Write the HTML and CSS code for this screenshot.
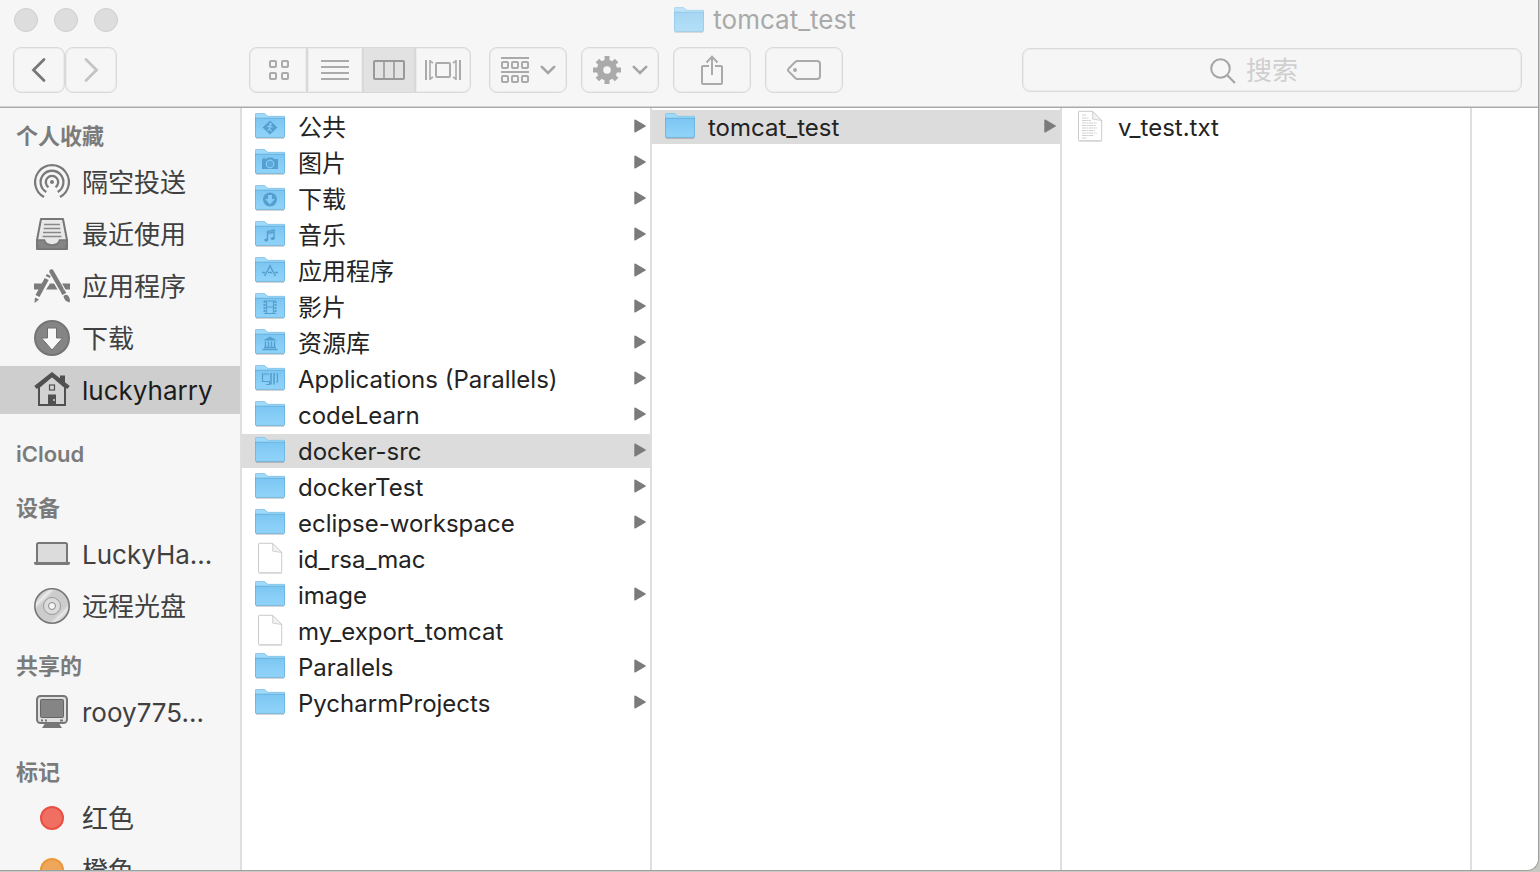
FILE: index.html
```
<!DOCTYPE html>
<html lang="zh-CN">
<head>
    <meta charset="UTF-8">
    <title>tomcat_test</title>
    <link rel="stylesheet" href="styles.css">
</head>
<body>
<svg class="defs" width="0" height="0" aria-hidden="true">
    <defs>
        <linearGradient id="blue" x1="0" y1="0" x2="0" y2="1">
            <stop offset="0" stop-color="#7cc6f2"/>
            <stop offset="1" stop-color="#91d4fa"/>
        </linearGradient>
        <linearGradient id="disc" x1="0" y1="0" x2="1" y2="1">
            <stop offset="0" stop-color="#cacaca"/>
            <stop offset="0.18" stop-color="#cacaca"/>
            <stop offset="0.25" stop-color="#ececec"/>
            <stop offset="0.32" stop-color="#cccccc"/>
            <stop offset="0.7" stop-color="#cccccc"/>
            <stop offset="0.77" stop-color="#e8e8e8"/>
            <stop offset="0.84" stop-color="#cacaca"/>
        </linearGradient>
    </defs>
    <symbol id="folder" viewBox="0 0 30 26">
        <path d="M1 25.2H29" stroke="#000" stroke-opacity=".22" stroke-width="1.2"/>
        <path d="M0 23V1.5Q0 .3 1.2 .3H9Q10 .3 10.6 1L12 2.6Q12.5 3 13.2 3H29Q30 3 30 4V23Z" fill="#9fdafa"/>
        <path d="M.4 5V1.5Q.4 .5 1.4 .5H9Q9.8 .5 10.4 1.2L12 2.8Q12.5 3.3 13.2 3.3H29.6" fill="none" stroke="#7fbfe2" stroke-width=".7"/>
        <path d="M0 5H30V23.5Q30 24.6 29 24.6H1Q0 24.6 0 23.5Z" fill="url(#blue)"/>
        <path d="M0 5.2H30M.3 5V24M29.7 4V24M.6 24.4H29.4" stroke="#5ca9d6" stroke-width=".7"/>
    </symbol>
    <symbol id="file" viewBox="0 0 26 32">
        <path d="M2 31.2H25" stroke="#000" stroke-opacity=".15"/>
        <path d="M1.5 2Q1.5 1.3 2.3 1.3H15.5L24.7 10.5V29.8Q24.7 30.7 23.8 30.7H2.4Q1.5 30.7 1.5 29.8Z" fill="#fff" stroke="#c4c4c4" stroke-width=".9"/>
        <path d="M15.5 1.3Q16 7 15.5 9Q18 9.6 24.7 10.5Z" fill="#f2f2f2" stroke="#c8c8c8" stroke-width=".8"/>
    </symbol>
    <symbol id="arrow" viewBox="0 0 12 14">
        <path d="M1 1.2L11.2 7L1 12.8Z" fill="#7b7b7b" stroke="#7b7b7b" stroke-width="1.4" stroke-linejoin="round"/>
    </symbol>
    <symbol id="down" viewBox="0 0 16 10">
        <path d="M1.8 1.8L8 8L14.2 1.8" fill="none" stroke="#a5a5a5" stroke-width="2.6" stroke-linecap="round"/>
    </symbol>
</svg>

<div id="window">
    <header>
        <div class="titlebar">
            <div class="lights">
                <button type="button" aria-label="关闭"></button>
                <button type="button" aria-label="最小化"></button>
                <button type="button" aria-label="缩放"></button>
            </div>
            <h1><svg width="30" height="26"><use href="#folder"/></svg>tomcat_test</h1>
        </div>
        <div class="toolbar">
            <div class="nav">
                <button type="button" aria-label="后退">
                    <svg width="16" height="26" viewBox="0 0 16 26"><path d="M13 2.5L2.5 13L13 23.5" fill="none" stroke="#777" stroke-width="2.8" stroke-linecap="round"/></svg>
                </button>
                <button type="button" aria-label="前进">
                    <svg width="16" height="26" viewBox="0 0 16 26"><path d="M3 2.5L13.5 13L3 23.5" fill="none" stroke="#c4c4c4" stroke-width="2.8" stroke-linecap="round"/></svg>
                </button>
            </div>
            <div class="views">
                <button type="button" class="icons" aria-label="图标">
                    <svg width="20" height="20" viewBox="0 0 20 20" fill="none" stroke="#aaa" stroke-width="2"><rect x="1" y="1" width="6" height="6" rx="1"/><rect x="13" y="1" width="6" height="6" rx="1"/><rect x="1" y="13" width="6" height="6" rx="1"/><rect x="13" y="13" width="6" height="6" rx="1"/></svg>
                </button>
                <button type="button" class="list" aria-label="列表">
                    <svg width="28" height="20" viewBox="0 0 28 20"><path d="M0 1H28M0 7H28M0 13H28M0 19H28" stroke="#aaa" stroke-width="2"/></svg>
                </button>
                <button type="button" class="columns selected" aria-label="分栏">
                    <svg width="32" height="20" viewBox="0 0 32 20" fill="none" stroke="#999" stroke-width="2"><rect x="1" y="1" width="30" height="18" rx="1"/><path d="M11 1V19M21 1V19" stroke-width="1.6"/></svg>
                </button>
                <button type="button" class="flow" aria-label="封面流">
                    <svg width="36" height="20" viewBox="0 0 36 20" fill="none" stroke="#aaa"><path d="M1 0V20M35 0V20" stroke-width="2"/><path d="M5 0V20M31 0V20" stroke-width="1.6"/><path d="M5 1L8 3M5 19L8 17M31 1L28 3M31 19L28 17" stroke-width="1.6"/><rect x="11" y="3" width="14" height="14" rx="1" stroke-width="2"/></svg>
                </button>
            </div>
            <button type="button" class="tool" aria-label="排列">
                <svg width="28" height="26" viewBox="0 0 28 26" fill="none" stroke="#aaa" stroke-width="2"><path d="M0 1H28M0 15H28"/><rect x="1" y="5" width="6" height="6" rx="1"/><rect x="11" y="5" width="6" height="6" rx="1"/><rect x="21" y="5" width="6" height="6" rx="1"/><rect x="1" y="19" width="6" height="6" rx="1"/><rect x="11" y="19" width="6" height="6" rx="1"/><rect x="21" y="19" width="6" height="6" rx="1"/></svg>
                <svg width="16" height="10"><use href="#down"/></svg>
            </button>
            <button type="button" class="tool" aria-label="操作">
                <svg width="28" height="28" viewBox="-14 -14 28 28"><g stroke="#aaa" stroke-width="5"><path d="M0 -14V-7M0 14V7M-14 0H-7M14 0H7M-9.6 -9.6L-5 -5M9.6 9.6L5 5M-9.6 9.6L-5 5M9.6 -9.6L5 -5"/></g><circle r="7" fill="none" stroke="#aaa" stroke-width="6.5"/></svg>
                <svg width="16" height="10"><use href="#down"/></svg>
            </button>
            <button type="button" class="tool" aria-label="共享">
                <svg width="24" height="30" viewBox="0 0 24 30" fill="none" stroke="#aaa" stroke-width="2"><path d="M9 11H3Q2 11 2 12V28Q2 29 3 29H21Q22 29 22 28V12Q22 11 21 11H15M12 20V2M6.5 7.5L12 1.6L17.5 7.5"/></svg>
            </button>
            <button type="button" class="tool" aria-label="编辑标记">
                <svg width="34" height="20" viewBox="0 0 34 20"><path d="M1.5 8.8L8.2 2Q9.2 1 10.6 1H30Q33 1 33 4V16Q33 19 30 19H10.6Q9.2 19 8.2 18L1.5 11.2Q.5 10 1.5 8.8Z" fill="none" stroke="#aaa" stroke-width="2"/><circle cx="8" cy="10" r="2" fill="#aaa"/></svg>
            </button>
            <div class="search">
                <svg width="26" height="26" viewBox="0 0 26 26"><path d="M17.5 17.5L25 25" stroke="#a5a5a5" stroke-width="2.2"/><circle cx="10.5" cy="10.5" r="9.3" fill="none" stroke="#a5a5a5" stroke-width="2"/></svg>
                <input type="text" placeholder="搜索" aria-label="搜索">
            </div>
        </div>
    </header>

    <div id="content">
        <nav id="sidebar">
            <section class="favorites">
                <h2>个人收藏</h2>
                <a href="#">
                    <svg width="36" height="36" viewBox="0 0 36 36" fill="none" stroke="#7a7a7a" stroke-width="2.3"><path d="M10 33A16.9 16.9 0 1 1 26 33"/><path d="M12.3 28A11.4 11.4 0 1 1 23.7 28"/><path d="M14.5 23.2A6.2 6.2 0 1 1 21.5 23.2"/><circle cx="18" cy="18" r="2" fill="#7a7a7a" stroke="none"/></svg>
                    <span>隔空投送</span>
                </a>
                <a href="#">
                    <svg width="36" height="36" viewBox="0 0 36 36"><path d="M7 3H29L33 24V33H3V24Z" fill="#e8e8e8" stroke="#777" stroke-width="2" stroke-linejoin="round"/><path d="M10 8.5H26M9.6 12.5H26.4M9 16.5H27M8.6 20.5H27.4" stroke="#888" stroke-width="1.7"/><path d="M3 24H10.5Q11.5 29 18 29T25.5 24H33L32 33H4Z" fill="#858585" stroke="#777" stroke-width="1.5"/></svg>
                    <span>最近使用</span>
                </a>
                <a href="#">
                    <svg width="36" height="36" viewBox="0 0 36 36"><path d="M0 15.5H9L6 21.500H0ZM16 15.500H21L24 21.500H12ZM26 15.500H36V21.500H29Z" fill="#7b7b7b"/><path d="M17.500 4L33 31" stroke="#f6f6f6" stroke-width="7"/><path d="M17.500 3.500L27.500 21" stroke="#7b7b7b" stroke-width="4.500" stroke-linecap="round"/><path d="M28.300 22.500L30.300 26" stroke="#7b7b7b" stroke-width="4.500"/><path d="M29.500 28Q33 25 35 29Q36.500 32 35.500 34.500Q30 33 29.500 28Z" fill="#7b7b7b"/><path d="M14.500 10.500L3.500 30" stroke="#f6f6f6" stroke-width="6"/><path d="M14.800 7L13.700 9M12.700 11L3.500 28" stroke="#7b7b7b" stroke-width="4.500"/><path d="M1 29.500L5 31.500L.5 35Z" fill="#7b7b7b"/></svg>
                    <span>应用程序</span>
                </a>
                <a href="#">
                    <svg width="36" height="36" viewBox="0 0 36 36"><circle cx="18" cy="18" r="17" fill="#858585" stroke="#757575" stroke-width="2"/><path d="M13.5 8H22.5V18H28.5L18 30L7.5 18H13.5Z" fill="#f8f8f8" stroke="#6e6e6e"/></svg>
                    <span>下载</span>
                </a>
                <a href="#" class="selected">
                    <svg width="36" height="36" viewBox="0 0 36 36"><path d="M26 3.500H31V14L26 9Z" fill="#505050"/><path d="M5 15L18 4L31 15V33H5Z" fill="#d2d2d2" stroke="#505050" stroke-width="2"/><path d="M1.500 15.500L18 2.500L34.500 15.500" fill="none" stroke="#505050" stroke-width="4"/><rect x="15.500" y="13" width="5" height="5" fill="none" stroke="#505050" stroke-width="1.200"/><path d="M14 22.500H22V33H14Z" fill="#505050"/><circle cx="20" cy="28" r="1" fill="#d2d2d2"/></svg>
                    <span>luckyharry</span>
                </a>
            </section>
            <section>
                <h2>iCloud</h2>
            </section>
            <section>
                <h2>设备</h2>
                <a href="#">
                    <svg width="36" height="36" viewBox="0 0 36 36"><rect x="3" y="7" width="30" height="21" rx="1.5" fill="#dcdcdc" stroke="#777" stroke-width="2"/><path d="M0 26H36V27Q36 29 33 29H3Q0 29 0 27Z" fill="#7b7b7b"/></svg>
                    <span>LuckyHa...</span>
                </a>
                <a href="#">
                    <svg width="36" height="36" viewBox="0 0 36 36" stroke="#777"><circle cx="18" cy="18" r="17.2" fill="url(#disc)" stroke-width="1.6"/><circle cx="18" cy="18" r="8.5" fill="#dcdcdc" stroke="#999"/><circle cx="18" cy="18" r="3.5" fill="#f4f4f4" stroke="#888"/></svg>
                    <span>远程光盘</span>
                </a>
            </section>
            <section>
                <h2>共享的</h2>
                <a href="#">
                    <svg width="36" height="36" viewBox="0 0 36 36"><path d="M12 28H24L28 34H8Z" fill="#777"/><rect x="3" y="2" width="30" height="27" rx="3.5" fill="#e0e0e0" stroke="#777" stroke-width="2"/><rect x="6.5" y="5.5" width="23" height="18" rx="1" fill="#858585" stroke="#666"/><path d="M7 26.5H9M11 26.5H13M26 26.5H29" stroke="#777" stroke-width="2"/></svg>
                    <span>rooy775...</span>
                </a>
            </section>
            <section>
                <h2>标记</h2>
                <a href="#"><i class="tag red"></i><span>红色</span></a>
                <a href="#"><i class="tag orange"></i><span>橙色</span></a>
            </section>
        </nav>

        <ul class="column">
            <li><a href="#">
                <svg width="30" height="26"><use href="#folder"/><path d="M15 7.5L22.5 14.5L15 21.5L7.5 14.5Z" fill="#559fd0"/><circle cx="15.5" cy="11" r="1.2" fill="#84ccf6"/><path d="M15.5 12.5L14.5 15.5L16.5 18.5M14.5 15.5L12.5 18M12 14L15 12.7L17.5 14.5" fill="none" stroke="#84ccf6" stroke-width="1.2"/></svg>
                <span>公共</span><svg width="12" height="14"><use href="#arrow"/></svg></a></li>
            <li><a href="#">
                <svg width="30" height="26"><use href="#folder"/><path d="M7 10H11L12.5 8.5H17.5L19 10H23V20H7ZM8 8.5H10V9.5H8Z" fill="#559fd0"/><circle cx="15" cy="15" r="3.8" fill="#5fa9da" stroke="#84ccf6" stroke-width="1.2"/></svg>
                <span>图片</span><svg width="12" height="14"><use href="#arrow"/></svg></a></li>
            <li><a href="#">
                <svg width="30" height="26"><use href="#folder"/><circle cx="15" cy="14.5" r="7" fill="#559fd0"/><path d="M13 10H17V14H20L15 19.5L10 14H13Z" fill="#84ccf6"/></svg>
                <span>下载</span><svg width="12" height="14"><use href="#arrow"/></svg></a></li>
            <li><a href="#">
                <svg width="30" height="26"><use href="#folder"/><path d="M12.5 19V10.5L19 9V17.5M12.5 12.5L19 11" fill="none" stroke="#559fd0" stroke-width="1.4"/><ellipse cx="11.2" cy="19" rx="2" ry="1.6" fill="#559fd0"/><ellipse cx="17.7" cy="17.5" rx="2" ry="1.6" fill="#559fd0"/></svg>
                <span>音乐</span><svg width="12" height="14"><use href="#arrow"/></svg></a></li>
            <li><a href="#">
                <svg width="30" height="26"><use href="#folder"/><path d="M15.5 8L9.5 19M14.5 8L20.5 19M7 15.5H10M13 15.5H17M20 15.5H23" stroke="#559fd0" stroke-width="1.5"/></svg>
                <span>应用程序</span><svg width="12" height="14"><use href="#arrow"/></svg></a></li>
            <li><a href="#">
                <svg width="30" height="26"><use href="#folder"/><path d="M9.5 8V20.5M20.5 8V20.5" stroke="#559fd0" stroke-width="2" stroke-dasharray="2 1"/><path d="M9 8H21M9 20.5H21M11.5 8V20.5M18.5 8V20.5M11.5 14H18.5" stroke="#559fd0" stroke-width="1.2"/></svg>
                <span>影片</span><svg width="12" height="14"><use href="#arrow"/></svg></a></li>
            <li><a href="#">
                <svg width="30" height="26"><use href="#folder"/><path d="M8 11.5L15 7.5L22 11.5Z" fill="#559fd0"/><path d="M10.5 12.5V18M13.5 12.5V18M16.5 12.5V18M19.5 12.5V18M9 18.5H21M7.5 20.5H22.5" stroke="#559fd0" stroke-width="1.4"/></svg>
                <span>资源库</span><svg width="12" height="14"><use href="#arrow"/></svg></a></li>
            <li><a href="#">
                <svg width="30" height="26"><use href="#folder"/><path d="M14 9H7.5V16.5H14M11 19.5H14.5V16M21 9H22.5V17H21" fill="none" stroke="#559fd0" stroke-width="1.2"/><path d="M16 8V19.5M19 8V19.5" stroke="#559fd0" stroke-width="1.6"/></svg>
                <span>Applications (Parallels)</span><svg width="12" height="14"><use href="#arrow"/></svg></a></li>
            <li><a href="#"><svg width="30" height="26"><use href="#folder"/></svg><span>codeLearn</span><svg width="12" height="14"><use href="#arrow"/></svg></a></li>
            <li><a href="#" class="selected"><svg width="30" height="26"><use href="#folder"/></svg><span>docker-src</span><svg width="12" height="14"><use href="#arrow"/></svg></a></li>
            <li><a href="#"><svg width="30" height="26"><use href="#folder"/></svg><span>dockerTest</span><svg width="12" height="14"><use href="#arrow"/></svg></a></li>
            <li><a href="#"><svg width="30" height="26"><use href="#folder"/></svg><span>eclipse-workspace</span><svg width="12" height="14"><use href="#arrow"/></svg></a></li>
            <li><a href="#"><svg width="30" height="32"><use href="#file"/></svg><span>id_rsa_mac</span></a></li>
            <li><a href="#"><svg width="30" height="26"><use href="#folder"/></svg><span>image</span><svg width="12" height="14"><use href="#arrow"/></svg></a></li>
            <li><a href="#"><svg width="30" height="32"><use href="#file"/></svg><span>my_export_tomcat</span></a></li>
            <li><a href="#"><svg width="30" height="26"><use href="#folder"/></svg><span>Parallels</span><svg width="12" height="14"><use href="#arrow"/></svg></a></li>
            <li><a href="#"><svg width="30" height="26"><use href="#folder"/></svg><span>PycharmProjects</span><svg width="12" height="14"><use href="#arrow"/></svg></a></li>
        </ul>

        <ul class="column">
            <li><a href="#" class="selected"><svg width="30" height="26"><use href="#folder"/></svg><span>tomcat_test</span><svg width="12" height="14"><use href="#arrow"/></svg></a></li>
        </ul>

        <ul class="column">
            <li><a href="#">
                <svg width="30" height="32"><use href="#file"/><path d="M7 5H12M7 8H14M7 10.5H16M7 13H22M7 15.5H21M7 18H22M7 20.5H20M7 23H22M7 25.5H19M7 28H12" stroke="#d0d0d0" stroke-dasharray="4 .6 2 .5"/></svg>
                <span>v_test.txt</span></a></li>
        </ul>
    </div>
</div>
</body>
</html>
```
FILE: styles.css
```
*{
    margin: 0;
    padding: 0;
    box-sizing: border-box;
}
body{
    height: 100vh;
    padding: 0 1px 1px 0;
    background: #c9c9c4;
    font-family: Inter, "Noto Sans CJK SC", sans-serif;
    font-size: 24px;
    color: #232323;
    overflow: hidden;
}
ul{
    list-style: none;
}
a{
    color: inherit;
    text-decoration: none;
}
button{
    background: none;
    border: none;
    font: inherit;
}
svg{
    display: block;
    flex: none;
}
.defs{
    position: absolute;
}
#window{
    height: 100%;
    display: flex;
    flex-direction: column;
    background: #fff;
    border: solid #a0a0a0;
    border-width: 0 1px 1px 0;
    border-bottom-right-radius: 12px;
    overflow: hidden;
}

/* header */
header{
    background: #f6f6f6;
    border-bottom: 1px solid #a9a9a9;
    box-shadow: inset 0 -1px #d2d2d2;
}
.titlebar{
    height: 40px;
    padding: 0 22px 0 14px;
    display: grid;
    grid-template-columns: 1fr auto 1fr;
    align-items: center;
}
.lights{
    display: flex;
    gap: 16px;
}
.lights button{
    width: 24px;
    height: 24px;
    border-radius: 50%;
    background: #dddddd;
    border: 1px solid #cecece;
}
h1{
    display: flex;
    align-items: center;
    gap: 9px;
    font-size: 26px;
    font-weight: 400;
    line-height: 40px;
    color: #a9a9a9;
}
h1 svg{
    opacity: .65;
}
.toolbar{
    display: flex;
    align-items: center;
    padding: 7px 16px 14px 13px;
}
.toolbar button{
    height: 46px;
    border: 1px solid #d9d9d9;
    border-radius: 8px;
    box-shadow: inset 0 0 0 1px #ececec;
    display: flex;
    align-items: center;
    justify-content: center;
}
.nav{
    display: flex;
    margin-right: 132px;
}
.nav button{
    width: 52px;
}
.views{
    display: flex;
}
.views button{
    border-radius: 0;
    border-width: 1px 2px 1px 0;
}
.toolbar .icons{
    width: 59px;
    padding-left: 2px;
    border-left-width: 1px;
    border-radius: 8px 0 0 8px;
}
.views .list{
    width: 56px;
}
.views .columns{
    width: 52px;
}
.toolbar .flow{
    width: 55px;
    border-right-width: 1px;
    border-radius: 0 8px 8px 0;
}
.views .selected{
    background: #e2e2e2;
    box-shadow: none;
}
.toolbar .tool{
    width: 78px;
    margin-left: 14px;
    gap: 11px;
}
.toolbar .views + .tool{
    margin-left: 18px;
}
.search{
    position: relative;
    flex: 1;
    max-width: 500px;
    margin-left: auto;
}
.search svg{
    position: absolute;
    left: calc(50% - 62px);
    top: 10px;
}
.search input{
    width: 100%;
    height: 44px;
    display: block;
    border: 1px solid #d9d9d9;
    border-radius: 8px;
    box-shadow: inset 0 0 0 1px #ececec;
    background: none;
    font: inherit;
    font-size: 26px;
    text-align: center;
    outline: none;
}
.search input::placeholder{
    color: #cfcfcf;
    opacity: 1;
}

/* sidebar */
#content{
    flex: 1;
    min-height: 0;
    display: flex;
}
#sidebar{
    width: 242px;
    flex: none;
    padding-top: 6px;
    background: #f6f6f6;
    border-right: 2px solid #dedede;
    overflow: hidden;
    font-size: 26px;
    color: #404040;
}
#sidebar section{
    padding-bottom: 10px;
}
#sidebar .favorites{
    padding-bottom: 14px;
}
#sidebar h2{
    padding-left: 16px;
    font-size: 22px;
    font-weight: 600;
    line-height: 44px;
    color: #7b7b7b;
}
#sidebar a{
    height: 48px;
    margin-bottom: 4px;
    padding: 0 16px 0 34px;
    display: flex;
    align-items: center;
    gap: 12px;
}
#sidebar span{
    padding-top: 2px;
    line-height: 46px;
    white-space: nowrap;
}
#sidebar a.selected{
    background: #cecece;
    color: #1c1c1c;
}
.tag{
    width: 24px;
    height: 24px;
    margin: 0 6px;
    flex: none;
    border-radius: 50%;
    border: 2px solid;
}
.red{
    background: #ef7063;
    border-color: #ea4f41;
}
.orange{
    background: #eea65a;
    border-color: #ec9839;
}

/* columns */
.column{
    width: 410px;
    flex: none;
    padding-top: 2px;
    border-right: 2px solid #dedede;
}
.column a{
    height: 34px;
    margin-bottom: 2px;
    padding: 0 4px 2px 13px;
    display: flex;
    align-items: center;
}
.column a.selected{
    background: #dcdcdc;
}
.column span{
    flex: 1;
    margin-left: 13px;
    padding-top: 4px;
    line-height: 30px;
    white-space: nowrap;
}
```
